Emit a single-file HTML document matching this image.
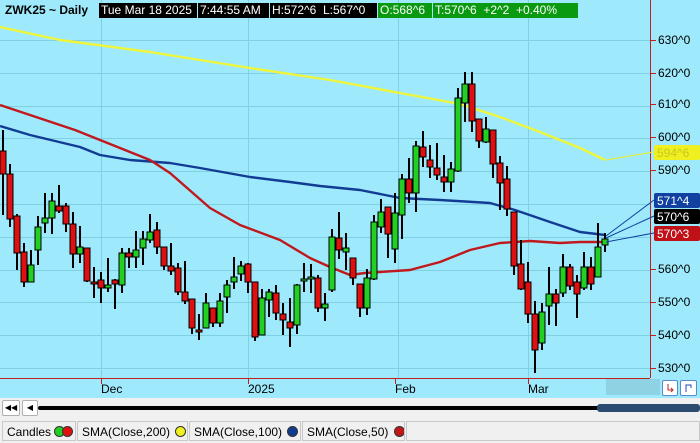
<!DOCTYPE html>
<html><head><meta charset="utf-8"><style>
body{margin:0;width:700px;height:443px;overflow:hidden;background:#f0f0f0;font-family:"Liberation Sans",sans-serif;position:relative}
#chart{position:absolute;left:0;top:0}
.hd{position:absolute;top:3px;height:15px;line-height:15px;font-size:12px;color:#fff;white-space:pre}
.leg{position:absolute;top:421px;height:20px;border:1px solid #c8c8c8;background:#f0f0f0;font-size:12px;line-height:20px;padding-left:4px;box-sizing:border-box;color:#000;white-space:nowrap;overflow:hidden}
.dot{display:inline-block;width:9px;height:9px;border-radius:50%;border:1px solid #333;vertical-align:-1px;margin-left:2px}
.btn{position:absolute;background:#fff;border:1px solid #b0b0b0;border-radius:2px;box-sizing:border-box}
</style></head><body>
<svg id="chart" width="700" height="420" xmlns="http://www.w3.org/2000/svg" font-family="Liberation Sans, sans-serif">
<rect x="0" y="0" width="700" height="398" fill="#9eeafc"/>
<g id="grid" stroke="#80d0e4" stroke-width="1"></g>
<g id="lines" fill="none" stroke-width="2.4" stroke-linejoin="round"></g>
<g id="candles"></g>
<line x1="650.5" y1="0" x2="650.5" y2="378" stroke="#c02020"/>
<line x1="0" y1="378.5" x2="650" y2="378.5" stroke="#c02020"/>
<g id="axis" font-size="12" fill="#000"></g>
<rect x="606" y="379" width="54" height="16" fill="#8fd2e4"/>
<rect x="0" y="398" width="700" height="22" fill="#f0f0f0"/>
<line x1="40" y1="408" x2="598" y2="408" stroke="#000" stroke-width="4" stroke-linecap="round"/>
<rect x="597" y="404" width="103" height="8" rx="3" fill="#2a4a70"/>
</svg>
<div class="btn" style="left:662px;top:380px;width:16px;height:16px;border-color:#5a8ad0"><svg width="14" height="14"><path d="M5 3v6h4" stroke="#c02020" fill="none"/><path d="M8 7l2 2-2 2" stroke="#c02020" fill="none"/></svg></div>
<div class="btn" style="left:680px;top:380px;width:17px;height:16px;border-color:#5a8ad0"><svg width="15" height="14"><path d="M5 11V4h5v3" stroke="#2040c0" fill="none"/></svg></div>
<div class="btn" style="left:2px;top:400px;width:18px;height:16px;font-size:8px;line-height:14px;text-align:center">◀◀</div>
<div class="btn" style="left:22px;top:400px;width:16px;height:16px;font-size:8px;line-height:14px;text-align:center">◀</div>
<div class="hd" style="left:5px;color:#000;font-weight:bold">ZWK25 ~ Daily</div>
<div class="hd" style="left:99px;width:98px;background:#000;padding-left:2px;box-sizing:border-box">Tue Mar 18 2025</div>
<div class="hd" style="left:198px;width:71px;background:#000;padding-left:2px;box-sizing:border-box">7:44:55 AM</div>
<div class="hd" style="left:270px;width:107px;background:#000;padding-left:2px;box-sizing:border-box">H:572^6  L:567^0</div>
<div class="hd" style="left:378px;width:54px;background:#0a9a10;padding-left:2px;box-sizing:border-box">O:568^6</div>
<div class="hd" style="left:433px;width:145px;background:#0a9a10;padding-left:2px;box-sizing:border-box">T:570^6  +2^2  +0.40%</div>
<div class="leg" style="left:2px;width:74px">Candles <span class="dot" style="background:#20d020;margin:0"></span><span class="dot" style="background:#e01010;margin-left:-3px"></span></div>
<div class="leg" style="left:77px;width:111px">SMA(Close,200) <span class="dot" style="background:#f0f020"></span></div>
<div class="leg" style="left:189px;width:112px">SMA(Close,100) <span class="dot" style="background:#103c90"></span></div>
<div class="leg" style="left:302px;width:103px">SMA(Close,50) <span class="dot" style="background:#c01818"></span></div>
<div class="leg" style="left:406px;width:294px"></div>
<script>
const NS="http://www.w3.org/2000/svg";
function el(p,t,a,txt){const e=document.createElementNS(NS,t);for(const k in a)e.setAttribute(k,a[k]);if(txt)e.textContent=txt;document.getElementById(p).appendChild(e);return e;}
for(let i=0;i<=10;i++){const y=40+i*32.8;el('grid','line',{x1:0,x2:650,y1:Math.round(y)+.5,y2:Math.round(y)+.5});}
[101,248,398,528].forEach(x=>el('grid','line',{x1:x+.5,x2:x+.5,y1:0,y2:378}));
const lab=[[40,'630^0'],[73,'620^0'],[104,'610^0'],[137,'600^0'],[170,'590^0'],[269,'560^0'],[302,'550^0'],[335,'540^0'],[368,'530^0']];
lab.forEach(([y,t])=>{el('axis','line',{x1:650,x2:656,y1:y+.5,y2:y+.5,stroke:'#c02020'});el('axis','text',{x:658,y:y+4},t);});
[[101,'Dec'],[248,'2025'],[395,'Feb'],[528,'Mar']].forEach(([x,t])=>{el('axis','line',{x1:x+.5,x2:x+.5,y1:378,y2:384,stroke:'#c02020'});el('axis','text',{x:x,y:393},t);});
const tags=[[145,'#f0f020','#c8c820','594^6'],[193,'#1040a0','#fff','571^4'],[209,'#000','#fff','570^6'],[226,'#c01018','#fff','570^3']];
tags.forEach(([y,bg,fg,t])=>{el('axis','rect',{x:654,y:y,width:46,height:15,fill:bg,rx:2});el('axis','text',{x:657,y:y+12,fill:fg},t);});
el('axis','path',{d:'M606 160 L654 152',stroke:'#f0f020',fill:'none'});
el('axis','path',{d:'M606 236 L654 200 M606 238 L654 216 M606 242 L654 233',stroke:'#1040a0',fill:'none'});
const Y=[[0,27],[60,40],[150,52],[250,68],[330,80],[400,93],[460,104],[500,117],[540,132],[580,148],[605,160]];
const B=[[0,126],[30,135],[80,147],[100,155],[130,160],[170,163],[200,168],[250,177],[290,182],[320,186],[360,190],[400,198],[440,200],[490,203],[515,210],[550,222],[580,232],[605,235]];
const R=[[0,105],[30,115],[75,130],[100,140],[150,160],[170,173],[210,208],[240,225],[280,240],[310,258],[330,267],[350,275],[365,273],[380,272],[410,270],[440,262],[470,250],[500,243],[530,241],[560,243],[580,242],[605,242]];
[[Y,'#eef53a'],[B,'#123c94'],[R,'#c0181c']].forEach(([p,c])=>el('lines','polyline',{points:p.map(a=>a.join(',')).join(' '),stroke:c}));
const C=[[3,'r',151,174,130,215],[10,'r',174,219,164,227],[17,'r',216,253,214,270],[24,'r',252,282,243,287],[31,'g',265,282,250,282],[38,'g',227,250,216,265],[45,'g',218,223,193,233],[52,'g',201,218,193,234],[59,'r',206,211,185,213],[66,'r',206,224,203,232],[73,'r',224,254,212,268],[80,'g',247,254,226,263],[87,'r',248,281,248,282],[94,'r',282,284,267,298],[101,'r',280,288,272,303],[108,'g',285,288,258,292],[115,'r',280,284,279,309],[122,'g',253,285,248,293],[129,'r',253,257,248,268],[136,'g',250,257,231,268],[143,'g',239,248,231,265],[150,'g',232,240,214,243],[157,'r',230,247,222,254],[164,'r',247,266,247,270],[171,'r',266,271,243,275],[178,'r',268,292,263,295],[185,'r',292,301,261,304],[192,'r',299,328,299,334],[199,'r',330,332,314,340],[206,'g',303,328,293,328],[213,'r',308,323,308,327],[220,'g',301,323,293,327],[227,'g',285,297,280,313],[234,'g',277,282,257,289],[241,'g',266,274,261,281],[248,'r',264,282,263,293],[255,'r',282,337,282,341],[262,'g',298,335,289,335],[269,'g',292,300,289,317],[276,'r',293,313,285,320],[283,'r',314,320,303,335],[290,'r',322,328,298,347],[297,'g',285,325,284,334],[304,'g',279,281,263,292],[311,'g',277,279,264,293],[318,'r',278,308,275,312],[325,'g',304,308,293,321],[332,'g',237,290,229,292],[339,'r',238,250,212,259],[346,'g',248,252,233,270],[353,'r',258,278,258,285],[360,'r',284,308,284,317],[367,'g',278,308,269,315],[374,'g',222,279,215,280],[381,'g',212,227,199,233],[388,'r',207,234,207,258],[395,'g',213,249,193,263],[402,'g',179,215,174,239],[409,'r',179,193,158,203],[416,'g',146,193,141,212],[423,'r',147,157,131,167],[430,'r',160,167,145,178],[437,'r',168,175,143,180],[444,'r',177,182,155,192],[451,'g',169,182,162,192],[458,'g',98,171,88,172],[465,'g',84,103,72,122],[472,'r',84,121,72,132],[479,'r',119,141,119,148],[486,'g',129,142,117,143],[493,'r',130,164,130,178],[500,'r',163,183,156,210],[507,'r',179,209,166,216],[514,'r',212,266,212,275],[521,'r',264,289,240,290],[528,'r',282,314,262,323],[535,'r',314,350,301,373],[542,'g',312,343,303,350],[549,'g',294,306,267,325],[556,'r',294,303,289,326],[563,'g',267,293,254,297],[570,'r',267,286,264,290],[577,'r',282,294,275,318],[584,'g',267,288,252,290],[591,'r',267,284,257,290],[598,'g',247,277,223,277],[605,'g',239,245,233,252]];
C.forEach(([x,c,bt,bb,wt,wb])=>{
 el('candles','line',{x1:x,x2:x,y1:wt,y2:wb,stroke:'#000','stroke-width':2});
 el('candles','rect',{x:x-3,y:bt,width:6,height:Math.max(2,bb-bt),fill:c=='g'?'#22d022':'#e01010',stroke:'#000','stroke-width':1});
});
</script>
</body></html>
